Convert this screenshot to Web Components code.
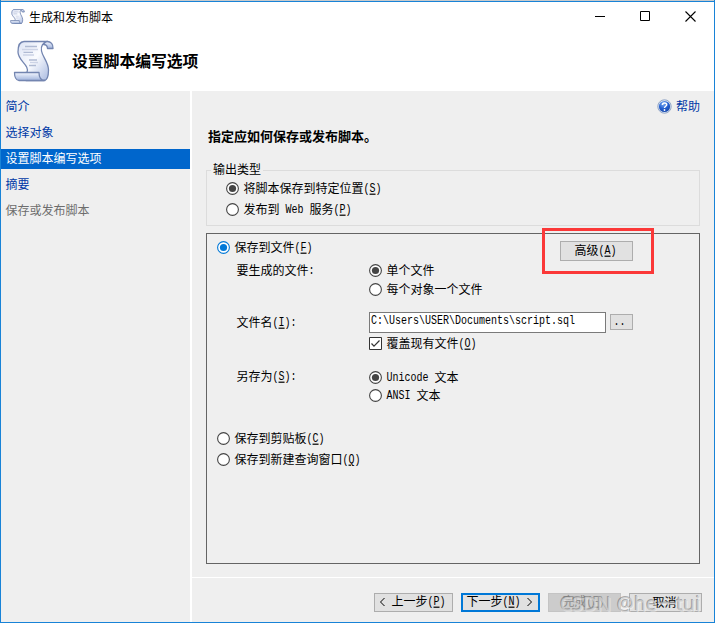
<!DOCTYPE html>
<html lang="zh-CN">
<head>
<meta charset="utf-8">
<title>生成和发布脚本</title>
<style>
html,body{margin:0;height:100%;overflow:hidden}
body{font:12px/18px "Noto Sans CJK SC",sans-serif;color:#000;background:#fff}
u{text-decoration:underline;text-underline-offset:1px;text-decoration-thickness:1px}
</style>
</head>
<body>
<wizard-window>
  <title-bar slot="title">生成和发布脚本</title-bar>
  <page-banner slot="banner">设置脚本编写选项</page-banner>
  <step-list slot="steps">
    <step-item>简介</step-item>
    <step-item>选择对象</step-item>
    <step-item current>设置脚本编写选项</step-item>
    <step-item>摘要</step-item>
    <step-item disabled>保存或发布脚本</step-item>
  </step-list>
  <help-link slot="help">帮助</help-link>
  <page-heading>指定应如何保存或发布脚本。</page-heading>
  <group-box>
    <span slot="legend">输出类型</span>
    <ui-radio checked>将脚本保存到特定位置<ui-mono>(<u>S</u>)</ui-mono></ui-radio>
    <ui-radio>发布到<ui-mono> Web </ui-mono>服务<ui-mono>(<u>P</u>)</ui-mono></ui-radio>
  </group-box>
  <option-panel>
    <form-row style="--top:4px">
      <ui-radio checked accent>保存到文件<ui-mono>(<u>F</u>)</ui-mono></ui-radio>
      <ui-button slot="end" style="--w:73px;--h:20px">高级<ui-mono>(<u>A</u>)</ui-mono></ui-button>
    </form-row>
    <form-row style="--top:5px">
      <span slot="label">要生成的文件<ui-mono>:</ui-mono></span>
      <ui-radio checked>单个文件</ui-radio>
    </form-row>
    <form-row style="--top:1px"><span slot="label"></span><ui-radio>每个对象一个文件</ui-radio></form-row>
    <form-row style="--top:14px;--h:21px">
      <span slot="label">文件名<ui-mono>(<u>I</u>):</ui-mono></span>
      <path-field><ui-mono>C:\Users\USER\Documents\script.sql</ui-mono></path-field>
      <ui-button class="browse" style="--w:23px;--h:16px;margin-bottom:2px"><ui-mono>..</ui-mono></ui-button>
    </form-row>
    <form-row style="--top:1px"><span slot="label"></span><ui-check>覆盖现有文件<ui-mono>(<u>O</u>)</ui-mono></ui-check></form-row>
    <form-row style="--top:16px">
      <span slot="label" style="margin-bottom:2px">另存为<ui-mono>(<u>S</u>):</ui-mono></span>
      <ui-radio checked><ui-mono>Unicode </ui-mono>文本</ui-radio>
    </form-row>
    <form-row><span slot="label"></span><ui-radio><ui-mono>ANSI </ui-mono>文本</ui-radio></form-row>
    <form-row style="--top:25px"><ui-radio>保存到剪贴板<ui-mono>(<u>C</u>)</ui-mono></ui-radio></form-row>
    <form-row style="--top:3px"><ui-radio>保存到新建查询窗口<ui-mono>(<u>Q</u>)</ui-mono></ui-radio></form-row>
    <highlight-frame slot="overlay"></highlight-frame>
  </option-panel>
  <button-bar slot="buttons">
    <ui-button style="--w:79px"><ui-chevron></ui-chevron>上一步<ui-mono>(<u>P</u>)</ui-mono></ui-button>
    <ui-button primary style="--w:79px">下一步<ui-mono>(<u>N</u>)</ui-mono><ui-chevron next></ui-chevron></ui-button>
    <ui-button disabled style="--w:73px">完成<ui-mono>(<u>F</u>)</ui-mono></ui-button>
    <ui-button style="--w:73px">取消</ui-button>
    <water-mark slot="overlay">CSDN @he一tui</water-mark>
  </button-bar>
</wizard-window>

<script>
const define = (name, css, html = '<slot></slot>') => {
  const template = document.createElement('template');
  template.innerHTML = `<style>*{box-sizing:border-box}:host{box-sizing:border-box}${css}</style>${html}`;
  customElements.define(name, class extends HTMLElement {
    constructor() {
      super();
      this.attachShadow({ mode: 'open' }).append(template.content.cloneNode(true));
    }
  });
};

const scroll = (id, size, line) => `<svg width="${size}" height="${size}" viewBox="0 0 42 42">
  <defs>
    <linearGradient id="${id}" x1="0" y1="0" x2="1" y2="1"><stop stop-color="#dde4f5"/><stop offset=".5" stop-color="#fbfcff"/><stop offset="1" stop-color="#a9bae0"/></linearGradient>
    <linearGradient id="${id}r" x1="0" y1="0" x2="0" y2="1"><stop stop-color="#f4f7ff"/><stop offset="1" stop-color="#a0b3dc"/></linearGradient>
  </defs>
  <g stroke="#7385b0" stroke-width="${line}" stroke-linejoin="round">
    <path fill="url(#${id})" d="M11 1.500H35C30 2 27.500 6 28.500 11C29.500 17 35.500 22 35.500 30C35.500 36 34 40.500 31 40.500H13V32.500H14C17 25 5 21 5 12C5 6 7 1.500 11 1.500Z"/>
    <path fill="url(#${id}r)" d="M34 1.500C38 1.500 40.300 4 40 8.500H34.500C34.500 6 33 4.500 30.500 4.500C31.500 2.500 32.500 1.500 34 1.500Z"/>
    <path fill="url(#${id}r)" d="M1.500 32.500H26C26 36.500 27.500 40.500 32 40.500H6C3 40.500 1.500 36.500 1.500 32.500Z"/>
  </g>
  <path d="M12 6.500H24M10.500 12.300H20M16 20H24M16 25.500H23" stroke="#b0bad3" stroke-width="1.300"/>
  <path d="M9 9.500H25M10 15H21M17 22.500H25" stroke="#cdd4e6" stroke-width="1.300"/>
</svg>`;

define('ui-mono', `:host{display:inline-block;font:10px/14px "Liberation Mono",monospace;white-space:pre;transform:translateY(-1px) scaleY(1.2)}`);
define('ui-chevron', `:host{display:inline-flex;width:12px;height:12px;align-items:center;vertical-align:-2px}:host([next]){transform:scaleX(-1)}`,
  `<svg width="12" height="12"><path d="M5.500 2L1.500 6L5.500 10" fill="none" stroke="#000"/></svg>`);

define('wizard-window', `
  :host{display:grid;width:715px;height:623px;grid-template-rows:89px 1fr;border:1px solid #1883d7;border-top:0;background:#fff;padding-top:2px;
    background-image:linear-gradient(#c8cacb 0 1px,#1883d7 1px 2px);background-size:100% 2px;background-repeat:no-repeat}
  header{display:flex;flex-direction:column;min-height:0}
  .body{display:grid;grid-template-columns:189px 1fr;column-gap:2px;min-height:0}
  aside{background:#efefef}
  main{display:grid;grid-template-rows:486px 1fr;row-gap:1px}
  .page,.foot{background:#efefef}
  .page{display:flex;flex-direction:column;padding:6px 14px 0}
  .help{display:flex;justify-content:flex-end;height:20px}`,
  `<header><slot name="title"></slot><slot name="banner"></slot></header>
   <div class="body"><aside><slot name="steps"></slot></aside>
   <main><div class="page"><div class="help"><slot name="help"></slot></div><slot></slot></div>
   <div class="foot"><slot name="buttons"></slot></div></main></div>`);

define('title-bar', `
  :host{display:flex;height:29px;align-items:center;padding:0 18px 0 9px}
  .text{margin-left:4px;flex:1}.controls{display:flex;gap:34px;align-items:center}svg{display:block}`,
  `${scroll('a', 15, 2.4)}<span class="text"><slot></slot></span><div class="controls">
   <svg width="11" height="11"><path d="M0 5.500H10" stroke="#000"/></svg>
   <svg width="11" height="11"><path d="M.5 .5H9.500V9.500H.5Z" transform="translate(0 .0)" stroke="#000" fill="none"/></svg>
   <svg width="11" height="11"><path d="M.5 .5L10.500 10.500M10.500 .5L.5 10.500" stroke="#000" stroke-width="1.100"/></svg></div>`);

define('page-banner', `
  :host{display:flex;height:60px;align-items:center;padding-left:12px;font-size:15.8px;font-weight:700}
  svg{display:block}.text{margin-left:17px}`, `${scroll('b', 42, 1.3)}<span class="text"><slot></slot></span>`);

define('step-list', `:host{display:flex;flex-direction:column;gap:6px;padding-top:6px}`);
define('step-item', `
  :host{display:block;height:20px;padding-left:4.500px;line-height:18px;color:#0039a6}
  :host([current]){background:#0066cc;color:#fff}:host([disabled]){color:#6d6d6d}`);

define('help-link', `:host{display:flex;align-items:center;gap:4px;color:#0039a6;height:18px;line-height:18px}`,
  `<svg width="15" height="15"><defs><radialGradient id="g" cx=".4" cy=".25" r=".8"><stop stop-color="#7eb0f5"/><stop offset=".55" stop-color="#245fd0"/><stop offset="1" stop-color="#1746a6"/></radialGradient></defs>
   <circle cx="7.500" cy="7.500" r="6.700" fill="#e1e9f5" stroke="#7790bb" stroke-width=".8"/><circle cx="7.500" cy="7.500" r="5.600" fill="url(#g)"/>
   <path d="M5.400 6C5.400 3.300 9.700 3.300 9.700 5.700C9.700 7.200 7.500 7.300 7.500 9" fill="none" stroke="#fff" stroke-width="1.500"/><circle cx="7.500" cy="11" r=".9" fill="#fff"/></svg><span><slot></slot></span>`);

define('page-heading', `:host{display:block;height:20px;margin-top:9px;padding-left:2px;font-size:13px;font-weight:700;line-height:19px}`);

define('group-box', `
  :host{display:block;height:56px;margin-top:24px;border:1px solid #dcdcdc}
  .legend{display:block;width:max-content;height:18px;margin:-11px 0 0 4px;padding:0 2px;background:#efefef;line-height:18px}
  .items{display:flex;flex-direction:column;gap:3px;padding:1px 0 0 19px}`,
  `<div class="legend"><slot name="legend"></slot></div><div class="items"><slot></slot></div>`);

define('option-panel', `:host{display:flex;flex-direction:column;position:relative;height:331px;margin-top:7px;padding-left:10px;border:1px solid #646464}`,
  `<slot></slot><slot name="overlay"></slot>`);

define('form-row', `
  :host{display:flex;flex:none;align-items:center;height:var(--h,18px);margin-top:var(--top,0px)}
  ::slotted([slot=label]){width:132.500px;margin-left:19.500px;line-height:18px}
  .fields{display:flex;gap:4px;align-items:center}
  .end{margin:8px 66px 0 auto}`,
  `<slot name="label"></slot><div class="fields"><slot></slot></div><div class="end"><slot name="end"></slot></div>`);

define('ui-radio', `
  :host{display:flex;height:18px;align-items:center;gap:4.500px;--ink:#444}
  :host([accent]){--ink:#0078d7}
  svg{display:block;flex:none}.ring{fill:#fff;stroke:var(--ink);stroke-width:1.1}
  .dot{fill:var(--ink);display:none}:host([checked]) .dot{display:block}
  span{white-space:pre;line-height:18px}`,
  `<svg width="13" height="13"><circle class="ring" cx="6.500" cy="6.500" r="5.900"/><circle class="dot" cx="6.500" cy="6.500" r="3.600"/></svg><span><slot></slot></span>`);

define('ui-check', `:host{display:flex;height:18px;align-items:center;gap:4.500px}svg{display:block}span{line-height:18px}`,
  `<svg width="13" height="13"><path d="M.5 .5H12.500V12.500H.5Z" fill="#fff" stroke="#333"/><path d="M2.500 6.500L5 9.200L10.500 3.500" fill="none" stroke="#333" stroke-width="1.200"/></svg><span><slot></slot></span>`);

define('path-field', `:host{display:flex;align-items:center;width:237px;height:21px;padding:0 0 0 1px;background:#fff;border:1px solid #7a7a7a}`);

define('ui-button', `
  :host{display:flex;align-items:center;justify-content:center;width:var(--w);height:var(--h,19px);background:#e1e1e1;border:1px solid #adadad}
  span{white-space:pre;line-height:17px;margin:-2px 2px 0 0}
  :host(.browse) span{margin:0 4px 0 0}
  :host([primary]){border:2px solid #0078d7}
  :host([disabled]){background:#ccc;border-color:#c4c4c4;color:#8b8b8b}`, `<span><slot></slot></span>`);

define('button-bar', `:host{display:flex;position:relative;justify-content:flex-end;gap:8px;padding:15px 12px 0 0}`,
  `<slot></slot><slot name="overlay"></slot>`);

define('highlight-frame', `:host{display:block;position:absolute;left:335px;top:-6px;width:112px;height:46px;border:3px solid #fb3838}`);

define('water-mark', `:host{display:block;position:absolute;left:368px;top:14px;font:19px/24px "Noto Sans","Noto Sans CJK SC",sans-serif;letter-spacing:.25px;white-space:nowrap;color:rgba(208,208,208,.8);text-shadow:-1px -1px 0 rgba(110,110,110,.55),1px 1px 0 rgba(255,255,255,.4)}`);
</script>
</body>
</html>
